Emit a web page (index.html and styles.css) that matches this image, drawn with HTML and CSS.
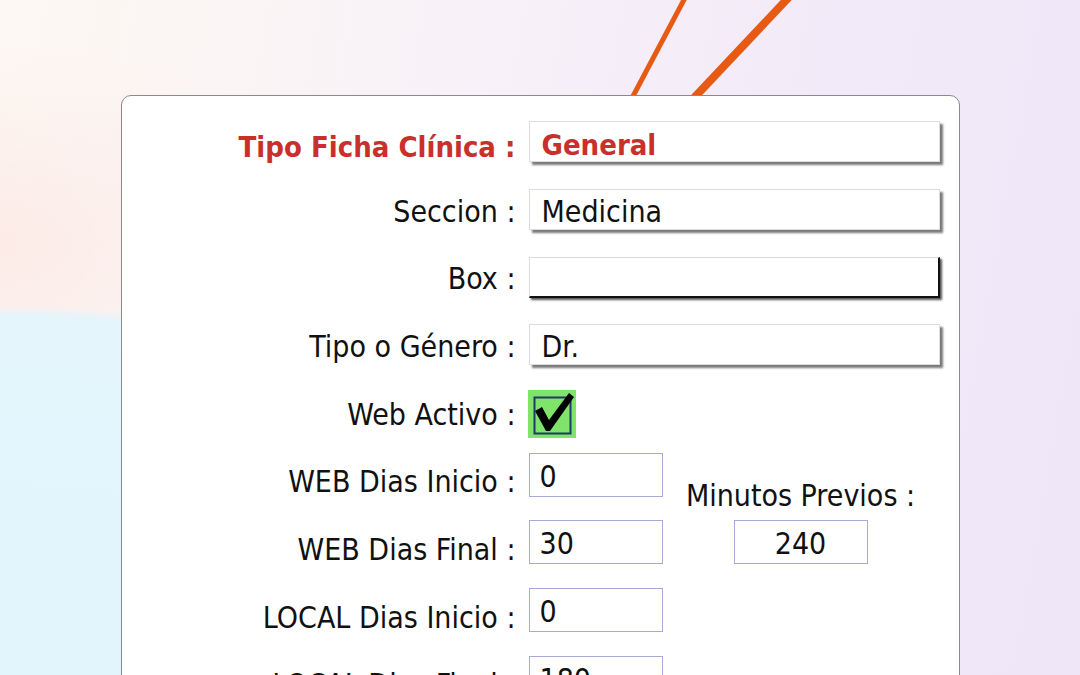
FILE: index.html
```html
<!DOCTYPE html>
<html lang="es">
<head>
    <meta charset="UTF-8">
    <meta name="viewport" content="width=device-width, initial-scale=1.0">
    <title>Ficha Profesional</title>
    <link rel="stylesheet" href="styles.css">
</head>
<body>

    <!-- decorative strokes behind the card -->
    <svg class="strokes" width="1080" height="120" viewBox="0 0 1080 120">
        <line x1="686" y1="-4" x2="631" y2="100" stroke="#e65a13" stroke-width="5"/>
        <line x1="790" y1="-4" x2="692" y2="100" stroke="#e65a13" stroke-width="8"/>
    </svg>

    <div class="page">
        <div class="card">
            <form class="ficha">

                <div class="label label-main">Tipo Ficha Clínica :</div>
                <div class="field field-wide field-main">General</div>

                <div class="label">Seccion :</div>
                <div class="field field-wide">Medicina</div>

                <div class="label">Box :</div>
                <div class="field field-wide field-focus"></div>

                <div class="label">Tipo o Género :</div>
                <div class="field field-wide">Dr.</div>

                <div class="label">Web Activo :</div>
                <div class="check">
                    <svg width="48" height="48" viewBox="0 0 48 48">
                        <rect x="0" y="0" width="48" height="48" fill="#7fe36c"/>
                        <rect x="6.5" y="7.5" width="36" height="36" fill="none" stroke="#1f3a66" stroke-width="2"/>
                        <path d="M7 21 L14 17 L21 30 L41 3 L46 7 L22 41 L18 41 Z" fill="#000"/>
                    </svg>
                </div>

                <div class="label">WEB Dias Inicio :</div>
                <div class="field field-small">0</div>

                <div class="previos">
                    <span class="previos-label">Minutos Previos :</span>
                    <div class="field field-small field-center">240</div>
                </div>

                <div class="label">WEB Dias Final :</div>
                <div class="field field-small">30</div>

                <div class="label">LOCAL Dias Inicio :</div>
                <div class="field field-small">0</div>

                <div class="label">LOCAL Dias Final :</div>
                <div class="field field-small">180</div>

            </form>
        </div>
    </div>

</body>
</html>
```

FILE: styles.css
```css
html, body {
    height: 100%;
}
body {
    margin: 0;
    overflow: hidden;
    font-family: "DejaVu Sans Condensed", "DejaVu Sans", sans-serif;
    font-stretch: condensed;
    color: #111;
    background:
        radial-gradient(ellipse 700px 370px at 0% 100%, #e2f4fc 0%, #e4f5fc 97%, rgba(228, 245, 252, 0) 100%),
        radial-gradient(ellipse 300px 200px at 0% 36%, #fcebe7 0%, rgba(252, 235, 231, 0) 100%),
        linear-gradient(100deg, #fdf8f2 0%, #f8f1f8 40%, #f2eaf8 70%, #efe6f8 100%);
}
.strokes {
    position: absolute;
    top: 0;
    left: 0;
}
.page {
    position: relative;
    padding: 95px 0 0 121px;
}
.card {
    width: 837px;
    min-height: 640px;
    background-color: #fff;
    border: 1.5px solid #8a8a8a;
    border-radius: 10px;
    padding-top: 13px;
}
.ficha {
    display: grid;
    grid-template-columns: 393.5px 134px 250px;
    grid-auto-rows: 67.7px;
    column-gap: 13px;
    align-items: center;
}
.label {
    grid-column: 1;
    text-align: right;
    font-size: 30px;
    line-height: 36px;
    white-space: nowrap;
    padding-top: 2px;
}
.label-main {
    color: #c9302b;
    font-weight: bold;
    font-size: 29px;
    padding-top: 8px;
}
.field {
    box-sizing: border-box;
    background-color: #fff;
    font-size: 30px;
    white-space: nowrap;
}
.field-wide {
    grid-column: 2 / 4;
    width: 411px;
    height: 41px;
    line-height: 44px;
    padding-left: 12px;
    border: 1px solid #dcdcdc;
    box-shadow: 3px 3px 2px #7a7a7a;
    margin-top: -2px;
}
.field-main {
    color: #c9302b;
    font-weight: bold;
    font-size: 29px;
    line-height: 46px;
}
.field-focus {
    border-right: 2px solid #111;
    border-bottom: 2px solid #111;
    box-shadow: 2px 2px 2px #555;
}
.field-small {
    grid-column: 2;
    width: 134px;
    height: 44px;
    line-height: 46px;
    padding-left: 10px;
    border: 1px solid #a9a9d9;
    margin-bottom: 13px;
}
.field-center {
    text-align: center;
    padding-left: 0;
    margin-bottom: 0;
}
.check {
    grid-column: 2;
    width: 48px;
    height: 48px;
    margin-left: -1px;
}
.check svg {
    display: block;
}
.previos {
    grid-column: 3;
    grid-row: 6 / 8;
    align-self: stretch;
    display: flex;
    flex-direction: column;
    align-items: center;
    justify-content: flex-end;
    gap: 6px;
    padding-bottom: 19px;
}
.previos-label {
    font-size: 30px;
    line-height: 36px;
    white-space: nowrap;
}
```
